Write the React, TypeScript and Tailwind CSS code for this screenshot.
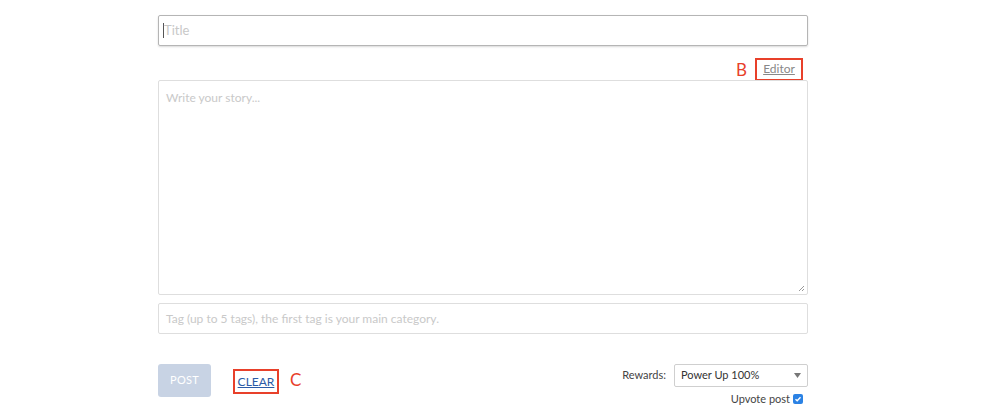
import React from 'react';

const font = { fontFamily: 'Lato, "Open Sans", sans-serif' };

const App: React.FC = () => {
  return (
    <div className="w-[991px] h-[409px] bg-white overflow-hidden" style={font}>
      <div className="ml-[158px] w-[650px] pt-[15px] flex flex-col">
        <div className="h-[31px] border border-[#b5b5b5] rounded-[2px] shadow-[0_1px_2px_rgba(0,0,0,0.15)] flex items-center px-[4px]">
          <span className="w-px h-[15px] bg-[#555]" />
          <span className="text-[13px] text-[#c8c8c8]">Title</span>
        </div>

        <div className="mt-[12px] h-[22px] flex justify-end items-center pr-[5px]">
          <span className="text-[#e8402a] text-[17px] leading-none mr-[8px]">B</span>
          <div className="h-[23px] w-[48px] border-2 border-[#e8402a] flex items-center justify-center">
            <span className="text-[12px] text-[#888] underline">Editor</span>
          </div>
        </div>

        <div className="relative h-[215px] border border-[#dedede] rounded-[2px] px-[7px] pt-[3px]">
          <span className="text-[12px] text-[#c9c9c9]">Write your story...</span>
          <svg className="absolute right-[2px] bottom-[2px]" width="7" height="7" viewBox="0 0 7 7">
            <path d="M6 1L1 6M6 4L4 6" stroke="#999" strokeWidth="1" />
          </svg>
        </div>

        <div className="mt-[8px] h-[31px] border border-[#dedede] rounded-[2px] flex items-center px-[7px]">
          <span className="text-[12px] text-[#c9c9c9]">Tag (up to 5 tags), the first tag is your main category.</span>
        </div>

        <div className="mt-[30px] flex items-start">
          <div className="w-[53px] h-[33px] bg-[#c8d3e4] rounded-[3px] flex items-center justify-center">
            <span className="text-[11px] text-white tracking-wide">POST</span>
          </div>
          <div className="ml-[22px] mt-[5px] w-[46px] h-[25px] border-2 border-[#e8402a] flex items-center justify-center">
            <span className="text-[12px] text-[#2b5aa6] underline">CLEAR</span>
          </div>
          <span className="ml-[11px] mt-[7px] text-[#e8402a] text-[17px] leading-none">C</span>

          <div className="ml-auto flex flex-col items-end">
            <div className="flex items-center">
              <span className="text-[11px] text-[#444] mr-[8px]">Rewards:</span>
              <div className="w-[134px] h-[23px] border border-[#cfcfcf] rounded-[2px] flex items-center justify-between px-[6px]">
                <span className="text-[11px] text-[#333]">Power Up 100%</span>
                <svg width="7" height="5" viewBox="0 0 7 5">
                  <path d="M0 0H7L3.5 5Z" fill="#777" />
                </svg>
              </div>
            </div>
            <div className="mt-[4px] flex items-center pr-[5px]">
              <span className="text-[11px] text-[#444] mr-[3px]">Upvote post</span>
              <span className="w-[10px] h-[10px] bg-[#2b82e4] rounded-[2px] flex items-center justify-center">
                <svg width="8" height="8" viewBox="0 0 8 8">
                  <path d="M1.5 4.2L3.2 5.8L6.5 2.2" stroke="white" strokeWidth="1.4" fill="none" />
                </svg>
              </span>
            </div>
          </div>
        </div>
      </div>
    </div>
  );
};

export default App;
